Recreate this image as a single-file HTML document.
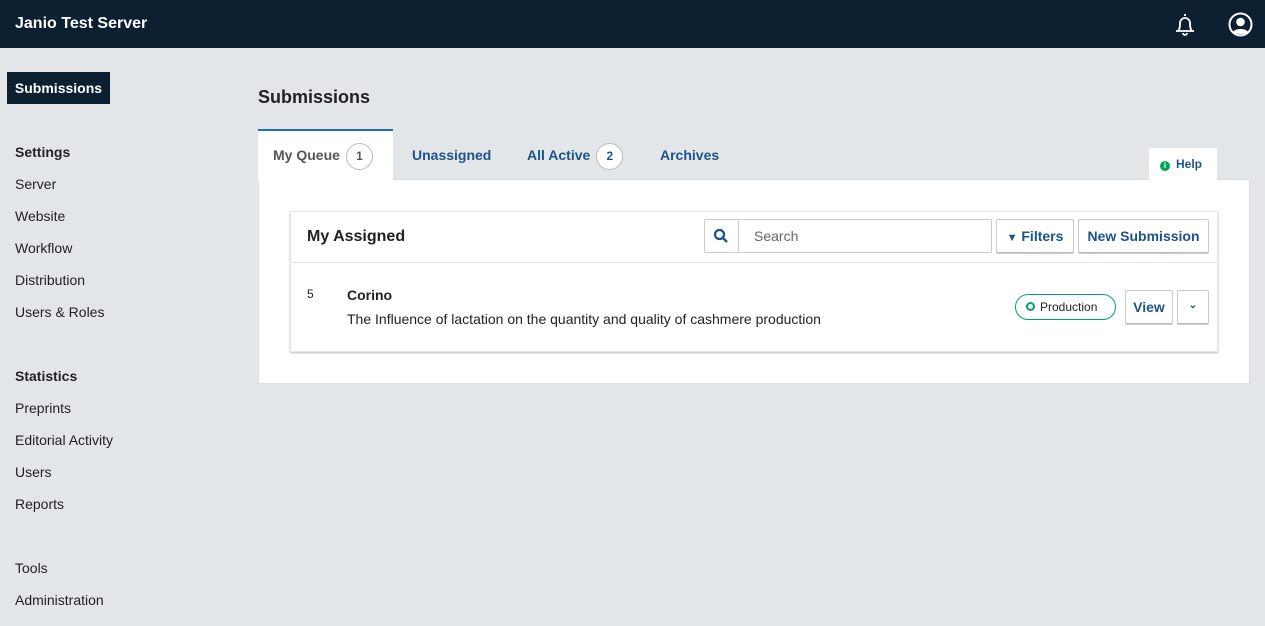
<!DOCTYPE html>
<html><head><meta charset="utf-8"><style>
*{box-sizing:border-box;margin:0;padding:0}
body{width:1265px;height:626px;overflow:hidden;background:#e3e6e8;font-family:"Liberation Sans",sans-serif;color:#222;position:relative}
.top{position:absolute;left:0;top:0;width:1265px;height:48px;background:#0c2032;color:#fff}
.top .t{position:absolute;left:15px;top:15px;font-size:16px;font-weight:bold}
.abs{position:absolute}
.nav{position:absolute;left:15px;font-size:14px;color:#222}
.navh{font-weight:bold}
.sub{position:absolute;left:7px;top:72px;width:103px;height:32px;background:#0c2032;color:#fff;font-weight:bold;font-size:14px;line-height:32px;text-align:center}
.blue{color:#1e5389;font-weight:bold}
.badge{display:inline-block;width:27px;height:27px;border:1px solid #bbb;border-radius:50%;background:#fff;text-align:center;line-height:25px;font-size:12px;font-weight:bold;vertical-align:middle;margin-left:6px}
.btn{position:absolute;background:#fff;border:1px solid #ccc;border-bottom-color:#bbb;box-shadow:0 1px 0 #ccc;border-radius:2px;color:#1e5389;font-weight:bold;font-size:14px;text-align:center}
</style></head><body>
<div class="top"><div class="t">Janio Test Server</div>
<svg class="abs" style="left:1173px;top:12px" width="24" height="26" viewBox="0 0 24 26"><path d="M12 2v2M5 19c2-2 2-5 2-8a5 5 0 0110 0c0 3 0 6 2 8zM3 19h18M10 21a2 2 0 004 0" fill="none" stroke="#fff" stroke-width="1.8"/></svg>
<svg class="abs" style="left:1228px;top:12px" width="25" height="25" viewBox="0 0 25 25"><circle cx="12.5" cy="12.5" r="11" fill="none" stroke="#fff" stroke-width="2"/><circle cx="12.5" cy="10" r="4.3" fill="#fff"/><path d="M5 20c2-4 13-4 15 0c-4 3-11 3-15 0z" fill="#fff"/></svg>
</div>
<div class="sub">Submissions</div>
<div class="nav navh" style="top:144px">Settings</div>
<div class="nav" style="top:176px">Server</div>
<div class="nav" style="top:208px">Website</div>
<div class="nav" style="top:240px">Workflow</div>
<div class="nav" style="top:272px">Distribution</div>
<div class="nav" style="top:304px">Users &amp; Roles</div>
<div class="nav navh" style="top:368px">Statistics</div>
<div class="nav" style="top:400px">Preprints</div>
<div class="nav" style="top:432px">Editorial Activity</div>
<div class="nav" style="top:464px">Users</div>
<div class="nav" style="top:496px">Reports</div>
<div class="nav" style="top:560px">Tools</div>
<div class="nav" style="top:592px">Administration</div>

<div class="abs" style="left:258px;top:87px;font-size:18px;font-weight:bold">Submissions</div>
<div class="abs" style="left:258px;top:179px;width:992px;height:205px;background:#fff;border:1px solid #ddd"></div>
<div class="abs" style="left:258px;top:129px;width:135px;height:52px;background:#fff;border-top:2px solid #1e6fc0"></div>
<div class="abs" style="left:273px;top:143px;font-size:14px;font-weight:bold;color:#555">My Queue<span class="badge" style="color:#555">1</span></div>
<div class="abs blue" style="left:412px;top:147px;font-size:14px">Unassigned</div>
<div class="abs blue" style="left:527px;top:143px;font-size:14px">All Active<span class="badge">2</span></div>
<div class="abs blue" style="left:660px;top:147px;font-size:14px">Archives</div>
<div class="abs" style="left:1149px;top:148px;width:68px;height:33px;background:#fff"></div>
<div class="abs blue" style="left:1160px;top:157px;font-size:12px"><span style="display:inline-block;width:10px;height:10px;border-radius:50%;background:#00a651;color:#fff;font-size:8px;text-align:center;line-height:10px;margin-right:6px">i</span>Help</div>

<div class="abs" style="left:290px;top:211px;width:928px;height:141px;background:#fff;border:1px solid #e6e6e6;box-shadow:0 1px 2px #bbb"></div>
<div class="abs" style="left:290px;top:262px;width:928px;height:1px;background:#e3e3e3"></div>
<div class="abs" style="left:307px;top:228px;font-size:16px;font-weight:bold">My Assigned</div>
<div class="abs" style="left:704px;top:219px;width:288px;height:34px;border:1px solid #ccc;border-radius:2px"></div>
<div class="abs" style="left:738px;top:219px;width:1px;height:34px;background:#ccc"></div>
<svg class="abs" style="left:713px;top:228px" width="16" height="16" viewBox="0 0 16 16"><circle cx="6.5" cy="6.5" r="4.5" fill="none" stroke="#1e5389" stroke-width="2.2"/><path d="M10 10l4 4" stroke="#1e5389" stroke-width="2.4"/></svg>
<div class="abs" style="left:754px;top:228px;font-size:14px;color:#666">Search</div>
<div class="btn" style="left:996px;top:219px;width:78px;height:34px;line-height:32px"><span style="font-size:11px">&#9660;</span> Filters</div>
<div class="btn" style="left:1078px;top:219px;width:131px;height:34px;line-height:32px">New Submission</div>
<div class="abs" style="left:307px;top:287px;font-size:12px">5</div>
<div class="abs" style="left:347px;top:287px;font-size:14px;font-weight:bold">Corino</div>
<div class="abs" style="left:347px;top:311px;font-size:14px">The Influence of lactation on the quantity and quality of cashmere production</div>
<div class="abs" style="left:1015px;top:294px;width:101px;height:26px;border:1px solid #00a370;border-radius:13px;font-size:12px;line-height:24px;padding-left:10px"><span style="display:inline-block;width:9px;height:9px;border:2px solid #00a370;border-radius:50%;margin-right:5px"></span>Production</div>
<div class="btn" style="left:1125px;top:290px;width:48px;height:34px;line-height:32px">View</div>
<div class="btn" style="left:1177px;top:290px;width:32px;height:34px;line-height:30px;font-size:10px">&#8964;</div>
</body></html>
